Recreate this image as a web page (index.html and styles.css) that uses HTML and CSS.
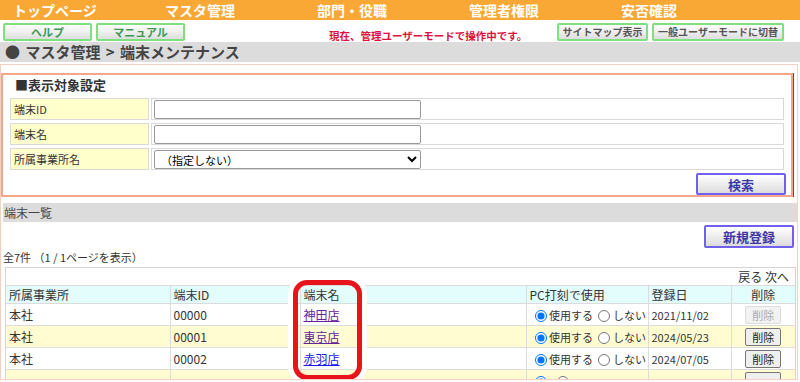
FILE: index.html
```html
<!DOCTYPE html>
<html lang="ja">
<head>
  <meta charset="UTF-8" />
  <title>端末メンテナンス</title>
  <link rel="stylesheet" href="styles.css">
</head>
<body>
  <!-- Global menu -->
  <nav class="topnav">
    <a href="#">トップページ</a>
    <a href="#">マスタ管理</a>
    <a href="#">部門・役職</a>
    <a href="#">管理者権限</a>
    <a href="#">安否確認</a>
  </nav>

  <!-- Tool bar -->
  <div class="toolbar">
    <button class="btn-green">ヘルプ</button>
    <button class="btn-green">マニュアル</button>
    <span class="mode-msg">現在、管理ユーザーモードで操作中です。</span>
    <div class="toolbar-right">
      <button class="btn-grey">サイトマップ表示</button>
      <button class="btn-grey">一般ユーザーモードに切替</button>
    </div>
  </div>

  <div class="crumb">● マスタ管理 &gt; 端末メンテナンス</div>

  <div class="frame">
    <!-- Search conditions -->
    <section class="search">
      <h3>■表示対象設定</h3>
      <table class="cond">
        <tr>
          <th>端末ID</th>
          <td><input type="text" class="field"></td>
        </tr>
        <tr>
          <th>端末名</th>
          <td><input type="text" class="field"></td>
        </tr>
        <tr>
          <th>所属事業所名</th>
          <td>
            <select class="field">
              <option>（指定しない）</option>
            </select>
          </td>
        </tr>
      </table>
      <div class="search-foot">
        <button class="btn-blue">検索</button>
      </div>
    </section>

    <!-- Terminal list -->
    <div class="bar">端末一覧</div>
    <div class="new-row">
      <button class="btn-blue btn-new">新規登録</button>
    </div>
    <div class="count">全7件 （1 / 1ページを表示）</div>

    <div class="list-box">
      <div class="pager">戻る 次へ</div>
      <table class="list">
        <tr class="head">
          <th class="c-office">所属事業所</th>
          <th class="c-id">端末ID</th>
          <th class="c-name">端末名</th>
          <th class="c-pc">PC打刻で使用</th>
          <th class="c-date">登録日</th>
          <th class="c-del">削除</th>
        </tr>
        <tr>
          <td>本社</td>
          <td>00000</td>
          <td><a href="#" class="visited">神田店</a></td>
          <td class="pc"><label><input type="radio" name="r0" checked> 使用する</label> <label><input type="radio" name="r0"> しない</label></td>
          <td class="date">2021/11/02</td>
          <td class="c-del"><button class="btn-del" disabled>削除</button></td>
        </tr>
        <tr class="alt">
          <td>本社</td>
          <td>00001</td>
          <td><a href="#" class="visited">東京店</a></td>
          <td class="pc"><label><input type="radio" name="r1" checked> 使用する</label> <label><input type="radio" name="r1"> しない</label></td>
          <td class="date">2024/05/23</td>
          <td class="c-del"><button class="btn-del">削除</button></td>
        </tr>
        <tr>
          <td>本社</td>
          <td>00002</td>
          <td><a href="#">赤羽店</a></td>
          <td class="pc"><label><input type="radio" name="r2" checked> 使用する</label> <label><input type="radio" name="r2"> しない</label></td>
          <td class="date">2024/07/05</td>
          <td class="c-del"><button class="btn-del">削除</button></td>
        </tr>
        <tr class="alt">
          <td></td>
          <td></td>
          <td></td>
          <td class="pc"><input type="radio" name="r3" checked> <input type="radio" name="r3" class="r-off"></td>
          <td></td>
          <td class="c-del"><button class="btn-del"></button></td>
        </tr>
      </table>
      <!-- highlight around the terminal name column -->
      <div class="mark"></div>
    </div>
  </div>
</body>
</html>
```

FILE: styles.css
```css
body {
  margin: 0;
  font-family: "Noto Sans CJK JP", sans-serif;
  font-size: 12px;
  color: #333;
  background: #fff;
}
button {
  font-family: "Noto Sans CJK JP", sans-serif;
  cursor: pointer;
}

/* global menu */
.topnav {
  display: flex;
  height: 20px;
  background: #f9a836;
  padding-left: 13px;
}
.topnav a {
  width: 152px;
  flex: none;
  color: #fff;
  font-weight: bold;
  font-size: 14px;
  line-height: 20px;
  text-decoration: none;
}

/* tool bar */
.toolbar {
  display: flex;
  align-items: flex-start;
  height: 22px;
  padding: 3px 0 0 3px;
  box-sizing: border-box;
}
.btn-green, .btn-grey {
  height: 18px;
  padding: 0;
  border: 2px solid #7fe07f;
  border-radius: 2px;
  background: linear-gradient(#ffffff, #dedede);
  font-size: 11px;
  font-weight: bold;
  line-height: 14px;
}
.btn-green {
  width: 89px;
  color: #3a9a55;
  margin-right: 4px;
}
.btn-grey {
  color: #555;
  font-size: 10px;
}
.btn-grey:first-child {
  width: 91px;
}
.btn-grey + .btn-grey {
  width: 132px;
  margin-left: 4px;
}
.mode-msg {
  margin-left: 140px;
  margin-top: 6px;
  color: #e0103a;
  font-size: 10.5px;
  font-weight: bold;
  line-height: 14px;
}
.toolbar-right {
  margin-left: auto;
  padding-right: 16px;
  display: flex;
}

.crumb {
  height: 20px;
  background: #dcdcdc;
  padding-left: 5px;
  font-size: 15px;
  font-weight: bold;
  line-height: 20px;
  color: #444;
  word-spacing: 2px;
}

/* framed area */
.frame {
  margin: 2px 2px 0 0;
  height: 316px;
  box-sizing: border-box;
  border: 1px solid #f5cfc2;
  overflow: hidden;
}

.search {
  margin: 8px 4px 0 0;
  border: 2px solid #f3a68c;
  box-shadow: 1px 0 0 #555;
}
.search h3 {
  margin: 0;
  height: 20px;
  padding-left: 12px;
  font-size: 13px;
  line-height: 20px;
  color: #333;
}
.cond {
  width: calc(100% - 10px);
  margin-left: 5px;
  border-spacing: 2px 3px;
}
.cond th, .cond td {
  height: 20px;
  padding: 0;
  border: 1px solid #d9d9d9;
}
.cond th {
  width: 134px;
  background: #ffffcc;
  font-size: 11px;
  font-weight: normal;
  text-align: left;
  padding-left: 3px;
}
.cond td {
  padding-left: 2px;
}
.field {
  display: block;
  width: 267px;
  height: 19px;
  box-sizing: border-box;
  border: 1px solid #999;
  border-radius: 2px;
  font-family: "Noto Sans CJK JP", sans-serif;
  font-size: 11px;
  background: #fff;
}
select.field {
  padding: 0 0 0 2px;
}
.search-foot {
  display: flex;
  justify-content: flex-end;
  padding-right: 5px;
}
.btn-blue {
  width: 90px;
  height: 22px;
  padding: 0;
  border: 2px solid #7060ee;
  border-radius: 2px;
  background: linear-gradient(#ffffff, #dcdcdc);
  color: #3c38a8;
  font-size: 13px;
  font-weight: bold;
}

.bar {
  margin: 6px 0 0 2px;
  height: 19px;
  background: #dcdcdc;
  padding-left: 1px;
  line-height: 19px;
  font-size: 12px;
  color: #444;
}
.new-row {
  display: flex;
  justify-content: flex-end;
  padding: 3px 3px 0 0;
}
.btn-new {
  height: 23px;
}
.count {
  margin: 1px 0 0 2px;
  font-size: 11px;
  line-height: 16px;
}

/* list */
.list-box {
  position: relative;
  margin: 2px 1px 0 4px;
  border: 1px solid #d4d4d4;
  background: #fff;
}
.pager {
  height: 17px;
  text-align: right;
  padding-right: 6px;
  line-height: 17px;
}
.list {
  width: 100%;
  border-collapse: collapse;
  table-layout: fixed;
}
.list th, .list td {
  box-sizing: border-box;
  padding: 0 0 0 3px;
  text-align: left;
  font-weight: normal;
  border-bottom: 1px solid #dcdcdc;
  border-left: 1px solid #dcdcdc;
  white-space: nowrap;
  overflow: hidden;
}
.list th:first-child, .list td:first-child {
  border-left: none;
}
.list td {
  height: 22px;
}
.list .head th {
  height: 17px;
  background: #e3fcfc;
  border-top: 1px solid #dcdcdc;
}
.list .alt td {
  background: #fffcd2;
}
.c-office { width: 164px; }
.c-id { width: 130px; }
.c-name { width: 226px; }
.c-pc { width: 122px; }
.c-date { width: 83px; }
.list .c-del {
  text-align: center;
  padding: 0;
}
.list .pc {
  font-size: 11px;
  padding-left: 0;
}
.list .date {
  font-size: 11px;
}
.list a {
  color: #1a1aee;
}
.list a.visited {
  color: #66229a;
}
.list input[type="radio"] {
  width: 12px;
  height: 12px;
  margin: 0 0 0 8px;
  vertical-align: -2px;
}
.list label + label input[type="radio"],
.list .r-off {
  margin-left: 3px;
}
.btn-del {
  width: 36px;
  height: 18px;
  padding: 0;
  border: 1px solid #777;
  border-radius: 2px;
  background: #efefef;
  color: #222;
  font-size: 11px;
  vertical-align: middle;
}
.btn-del:disabled {
  border-color: #ddd;
  background: #f2f2f2;
  color: #aaa;
}

.mark {
  position: absolute;
  left: 287px;
  top: 12px;
  width: 69px;
  height: 100px;
  box-sizing: border-box;
  border: 5px solid #e8141c;
  border-radius: 14px;
  box-shadow: 0 0 0 5px #fff;
}
```
